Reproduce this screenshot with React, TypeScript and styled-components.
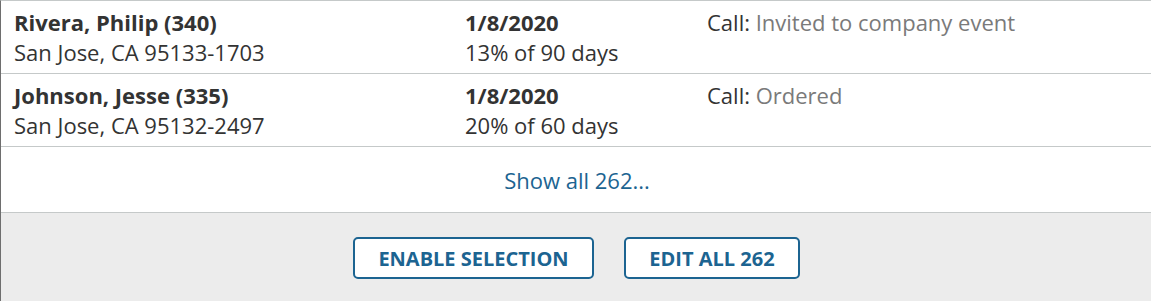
import React from "react";
import styled, { createGlobalStyle } from "styled-components";

const Global = createGlobalStyle`
  html, body { margin: 0; padding: 0; background: #ffffff; }
  body { font-family: "Open Sans", "Liberation Sans", sans-serif; color: #333333; }
`;

const Panel = styled.div`
  width: 1151px;
  height: 301px;
  box-sizing: border-box;
  border-left: 1px solid #6e6e6e;
  border-top: 1px solid #c5c9c9;
  display: flex;
  flex-direction: column;
  overflow: hidden;
`;

const Row = styled.div`
  display: grid;
  grid-template-columns: 451px 242px 1fr;
  height: 73px;
  box-sizing: border-box;
  padding: 6px 0 0 13px;
  border-bottom: 1px solid #c5c9c9;
  font-size: 22px;
  line-height: 30px;
`;

const Cell = styled.div`
  display: flex;
  flex-direction: column;
`;

const Strong = styled.span`
  font-weight: 700;
  color: #333333;
`;

const Plain = styled.span`
  color: #333333;
`;

const Muted = styled.span`
  color: #7a7a7a;
`;

const ShowAll = styled.div`
  height: 66px;
  box-sizing: border-box;
  border-bottom: 1px solid #c5c9c9;
  display: flex;
  align-items: center;
  justify-content: center;
  font-size: 22px;
  color: #1c6491;
  padding-left: 2px;
`;

const Footer = styled.div`
  flex: 1;
  background: #ececec;
  display: flex;
  justify-content: center;
  align-items: flex-start;
  gap: 30px;
  padding-top: 24px;
  padding-left: 1px;
`;

const Button = styled.button<{ $w: number }>`
  width: ${(p) => p.$w}px;
  height: 42px;
  box-sizing: border-box;
  background: #ffffff;
  border: 2px solid #1c6491;
  border-radius: 5px;
  color: #1c6491;
  font-family: "Open Sans", "Liberation Sans", sans-serif;
  font-weight: 700;
  font-size: 20px;
  text-transform: uppercase;
  letter-spacing: 0;
  padding: 0;
  cursor: pointer;
`;

const rows = [
  {
    name: "Rivera, Philip (340)",
    addr: "San Jose, CA 95133-1703",
    date: "1/8/2020",
    pct: "13% of 90 days",
    note: "Invited to company event",
  },
  {
    name: "Johnson, Jesse (335)",
    addr: "San Jose, CA 95132-2497",
    date: "1/8/2020",
    pct: "20% of 60 days",
    note: "Ordered",
  },
];

export default function App() {
  return (
    <>
      <Global />
      <Panel>
        {rows.map((r) => (
          <Row key={r.name}>
            <Cell>
              <Strong>{r.name}</Strong>
              <Plain>{r.addr}</Plain>
            </Cell>
            <Cell>
              <Strong>{r.date}</Strong>
              <Plain>{r.pct}</Plain>
            </Cell>
            <Cell>
              <span>
                <Plain>Call: </Plain>
                <Muted>{r.note}</Muted>
              </span>
            </Cell>
          </Row>
        ))}
        <ShowAll>Show all 262...</ShowAll>
        <Footer>
          <Button $w={241}>Enable Selection</Button>
          <Button $w={176}>Edit All 262</Button>
        </Footer>
      </Panel>
    </>
  );
}
